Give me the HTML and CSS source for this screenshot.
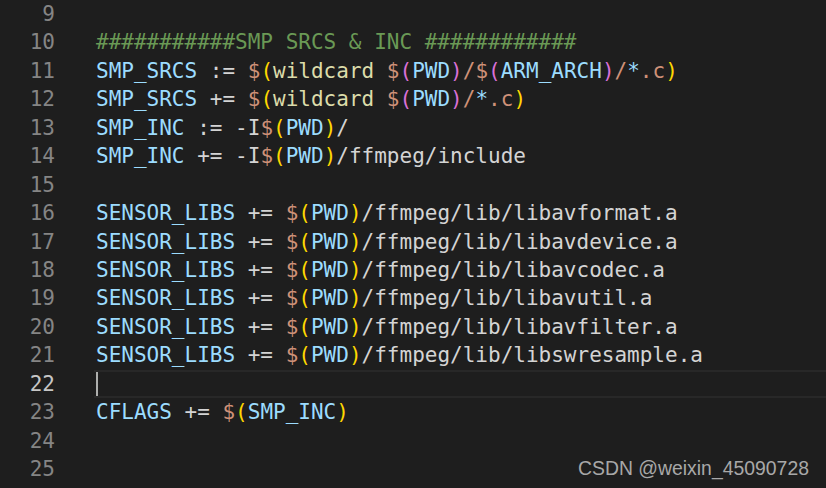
FILE: index.html
```html
<!DOCTYPE html>
<html>
<head>
<meta charset="utf-8">
<link rel="stylesheet" href="styles.css">
</head>
<body>
<div class="editor">
  <div class="row"><span class="ln">9</span><span class="code"></span></div>
  <div class="row"><span class="ln">10</span><span class="code"><span class="c">###########SMP SRCS &amp; INC ############</span></span></div>
  <div class="row"><span class="ln">11</span><span class="code"><span class="v">SMP_SRCS</span> := <span class="d">$</span><span class="p1">(</span><span class="f">wildcard</span> <span class="d">$</span><span class="p2">(</span><span class="v">PWD</span><span class="p2">)</span><span class="d">/$</span><span class="p2">(</span><span class="v">ARM_ARCH</span><span class="p2">)</span><span class="d">/</span><span class="v">*</span><span class="d">.c</span><span class="p1">)</span></span></div>
  <div class="row"><span class="ln">12</span><span class="code"><span class="v">SMP_SRCS</span> += <span class="d">$</span><span class="p1">(</span><span class="f">wildcard</span> <span class="d">$</span><span class="p2">(</span><span class="v">PWD</span><span class="p2">)</span><span class="d">/</span><span class="v">*</span><span class="d">.c</span><span class="p1">)</span></span></div>
  <div class="row"><span class="ln">13</span><span class="code"><span class="v">SMP_INC</span> := -I<span class="d">$</span><span class="p1">(</span><span class="v">PWD</span><span class="p1">)</span>/</span></div>
  <div class="row"><span class="ln">14</span><span class="code"><span class="v">SMP_INC</span> += -I<span class="d">$</span><span class="p1">(</span><span class="v">PWD</span><span class="p1">)</span>/ffmpeg/include</span></div>
  <div class="row"><span class="ln">15</span><span class="code"></span></div>
  <div class="row"><span class="ln">16</span><span class="code"><span class="v">SENSOR_LIBS</span> += <span class="d">$</span><span class="p1">(</span><span class="v">PWD</span><span class="p1">)</span>/ffmpeg/lib/libavformat.a</span></div>
  <div class="row"><span class="ln">17</span><span class="code"><span class="v">SENSOR_LIBS</span> += <span class="d">$</span><span class="p1">(</span><span class="v">PWD</span><span class="p1">)</span>/ffmpeg/lib/libavdevice.a</span></div>
  <div class="row"><span class="ln">18</span><span class="code"><span class="v">SENSOR_LIBS</span> += <span class="d">$</span><span class="p1">(</span><span class="v">PWD</span><span class="p1">)</span>/ffmpeg/lib/libavcodec.a</span></div>
  <div class="row"><span class="ln">19</span><span class="code"><span class="v">SENSOR_LIBS</span> += <span class="d">$</span><span class="p1">(</span><span class="v">PWD</span><span class="p1">)</span>/ffmpeg/lib/libavutil.a</span></div>
  <div class="row"><span class="ln">20</span><span class="code"><span class="v">SENSOR_LIBS</span> += <span class="d">$</span><span class="p1">(</span><span class="v">PWD</span><span class="p1">)</span>/ffmpeg/lib/libavfilter.a</span></div>
  <div class="row"><span class="ln">21</span><span class="code"><span class="v">SENSOR_LIBS</span> += <span class="d">$</span><span class="p1">(</span><span class="v">PWD</span><span class="p1">)</span>/ffmpeg/lib/libswresample.a</span></div>
  <div class="row current"><span class="ln">22</span><span class="code"><span class="cursor"></span></span></div>
  <div class="row"><span class="ln">23</span><span class="code"><span class="v">CFLAGS</span> += <span class="d">$</span><span class="p1">(</span><span class="v">SMP_INC</span><span class="p1">)</span></span></div>
  <div class="row"><span class="ln">24</span><span class="code"></span></div>
  <div class="row"><span class="ln">25</span><span class="code"></span></div>
  <div class="watermark">CSDN @weixin_45090728</div>
</div>
</body>
</html>
```

FILE: styles.css
```css
html, body {
  margin: 0;
  padding: 0;
  background: #1e1e1e;
}
.editor {
  position: relative;
  width: 826px;
  height: 488px;
  overflow: hidden;
  background: #1e1e1e;
  font-family: "DejaVu Sans Mono", monospace;
  font-size: 21px;
  color: #d4d4d4;
}
.row {
  display: flex;
  height: 28.44px;
  line-height: 28.44px;
  white-space: pre;
}
.ln {
  width: 55px;
  flex: none;
  text-align: right;
  color: #858585;
}
.code {
  flex: 1;
  margin-left: 41px;
  position: relative;
}
.current .ln {
  color: #c6c6c6;
}
.current .code {
  margin-left: 39px;
  border-top: 2px solid #282828;
  border-bottom: 2px solid #282828;
  box-sizing: border-box;
}
.cursor {
  position: absolute;
  left: 2px;
  top: 0;
  width: 2px;
  height: 100%;
  background: #aeafad;
}
.v { color: #9cdcfe; }
.d { color: #ce9178; }
.f { color: #dcdcaa; }
.c { color: #6a9955; }
.p1 { color: #ffd700; }
.p2 { color: #da70d6; }
.watermark {
  position: absolute;
  left: 578px;
  top: 457px;
  font-family: "Liberation Sans", Arial, sans-serif;
  font-size: 19.4px;
  line-height: 22px;
  color: #a8a8a8;
  white-space: nowrap;
}
```
